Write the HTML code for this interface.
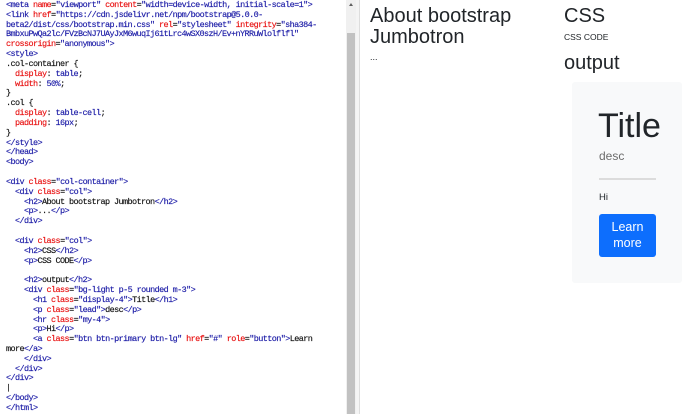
<!DOCTYPE html>
<html><head><meta charset="utf-8"><style>
*{margin:0;padding:0;box-sizing:border-box}
body{width:690px;height:414px;overflow:hidden;background:#fff;position:relative;font-family:"Liberation Sans",sans-serif}
#code{position:absolute;left:0;top:0;width:346px;height:414px;background:#fff;overflow:hidden}
#code pre{position:absolute;left:6px;top:1px;font-family:"Liberation Mono",monospace;font-size:8.5px;letter-spacing:-0.6px;line-height:9.83px;color:#111;white-space:pre;-webkit-text-stroke:0.15px}
.t{color:#1a1aa6}.a{color:#e81010}.v{color:#1a1aa6}
#track{position:absolute;left:346px;top:0;width:10px;height:414px;background:#f0f0f0}
#thumb{position:absolute;left:347px;top:33px;width:8px;height:381px;background:#c1c1c1}
#arr{position:absolute;left:349px;top:3px;width:0;height:0;border-left:2px solid transparent;border-right:2px solid transparent;border-bottom:3px solid #606060}
#div{position:absolute;left:356px;top:0;width:4px;height:414px;background:#f4f4f4;border-right:1px solid #ddd}
.h{position:absolute;font-size:20px;line-height:21px;color:#212529}
</style></head><body>
<div id="code"><pre><span class="t">&lt;meta</span> <span class="a">name</span>=<span class="v">"viewport"</span> <span class="a">content</span>=<span class="v">"width=device-width, initial-scale=1"</span><span class="t">&gt;</span>
<span class="t">&lt;link</span> <span class="a">href</span>=<span class="v">"https://cdn.jsdelivr.net/npm/bootstrap@5.0.0-</span>
<span class="v">beta2/dist/css/bootstrap.min.css"</span> <span class="a">rel</span>=<span class="v">"stylesheet"</span> <span class="a">integrity</span>=<span class="v">"sha384-</span>
<span class="v">BmbxuPwQa2lc/FVzBcNJ7UAyJxM6wuqIj61tLrc4wSX0szH/Ev+nYRRuWlolflfl"</span>
<span class="a">crossorigin</span>=<span class="v">"anonymous"</span><span class="t">&gt;</span>
<span class="t">&lt;style&gt;</span>
.col-container {
  <span class="a">display</span>: <span class="v">table</span>;
  <span class="a">width</span>: <span class="v">50%</span>;
}
.col {
  <span class="a">display</span>: <span class="v">table-cell</span>;
  <span class="a">padding</span>: <span class="v">16px</span>;
}
<span class="t">&lt;/style&gt;</span>
<span class="t">&lt;/head&gt;</span>
<span class="t">&lt;body&gt;</span>

<span class="t">&lt;div</span> <span class="a">class</span>=<span class="v">"col-container"</span><span class="t">&gt;</span>
  <span class="t">&lt;div</span> <span class="a">class</span>=<span class="v">"col"</span><span class="t">&gt;</span>
    <span class="t">&lt;h2&gt;</span>About bootstrap Jumbotron<span class="t">&lt;/h2&gt;</span>
    <span class="t">&lt;p&gt;</span>...<span class="t">&lt;/p&gt;</span>
  <span class="t">&lt;/div&gt;</span>

  <span class="t">&lt;div</span> <span class="a">class</span>=<span class="v">"col"</span><span class="t">&gt;</span>
    <span class="t">&lt;h2&gt;</span>CSS<span class="t">&lt;/h2&gt;</span>
    <span class="t">&lt;p&gt;</span>CSS CODE<span class="t">&lt;/p&gt;</span>

    <span class="t">&lt;h2&gt;</span>output<span class="t">&lt;/h2&gt;</span>
    <span class="t">&lt;div</span> <span class="a">class</span>=<span class="v">"bg-light p-5 rounded m-3"</span><span class="t">&gt;</span>
      <span class="t">&lt;h1</span> <span class="a">class</span>=<span class="v">"display-4"</span><span class="t">&gt;</span>Title<span class="t">&lt;/h1&gt;</span>
      <span class="t">&lt;p</span> <span class="a">class</span>=<span class="v">"lead"</span><span class="t">&gt;</span>desc<span class="t">&lt;/p&gt;</span>
      <span class="t">&lt;hr</span> <span class="a">class</span>=<span class="v">"my-4"</span><span class="t">&gt;</span>
      <span class="t">&lt;p&gt;</span>Hi<span class="t">&lt;/p&gt;</span>
      <span class="t">&lt;a</span> <span class="a">class</span>=<span class="v">"btn btn-primary btn-lg"</span> <span class="a">href</span>=<span class="v">"#"</span> <span class="a">role</span>=<span class="v">"button"</span><span class="t">&gt;</span>Learn
more<span class="t">&lt;/a&gt;</span>
    <span class="t">&lt;/div&gt;</span>
  <span class="t">&lt;/div&gt;</span>
<span class="t">&lt;/div&gt;</span>
|
<span class="t">&lt;/body&gt;</span>
<span class="t">&lt;/html&gt;</span></pre></div>
<div id="track"></div><div id="thumb"></div><div id="arr"></div><div id="div"></div>

<div class="h" style="left:370px;top:6px">About bootstrap<br>Jumbotron</div>
<div style="position:absolute;left:370px;top:52px;font-size:9px;color:#212529">...</div>
<div class="h" style="left:564px;top:6px">CSS</div>
<div style="position:absolute;left:564px;top:32px;font-size:8.5px;color:#212529">CSS CODE</div>
<div class="h" style="left:564px;top:53px">output</div>
<div style="position:absolute;left:572px;top:82px;width:110px;height:201px;background:#f8f9fa;border-radius:3px"></div>
<div style="position:absolute;left:598px;top:106px;font-size:34px;font-weight:300;color:#212529;line-height:40px">Title</div>
<div style="position:absolute;left:599px;top:149px;font-size:12px;color:#6c6c6c">desc</div>
<div style="position:absolute;left:599px;top:178px;width:57px;height:2px;background:#dcdcdc"></div>
<div style="position:absolute;left:599px;top:192px;font-size:9.5px;color:#212529">Hi</div>
<div style="position:absolute;left:599px;top:214px;width:57px;height:43px;background:#0d6efd;border-radius:3px;color:#fff;font-size:12.5px;line-height:16px;text-align:center;padding-top:5px">Learn<br>more</div>
</body></html>
